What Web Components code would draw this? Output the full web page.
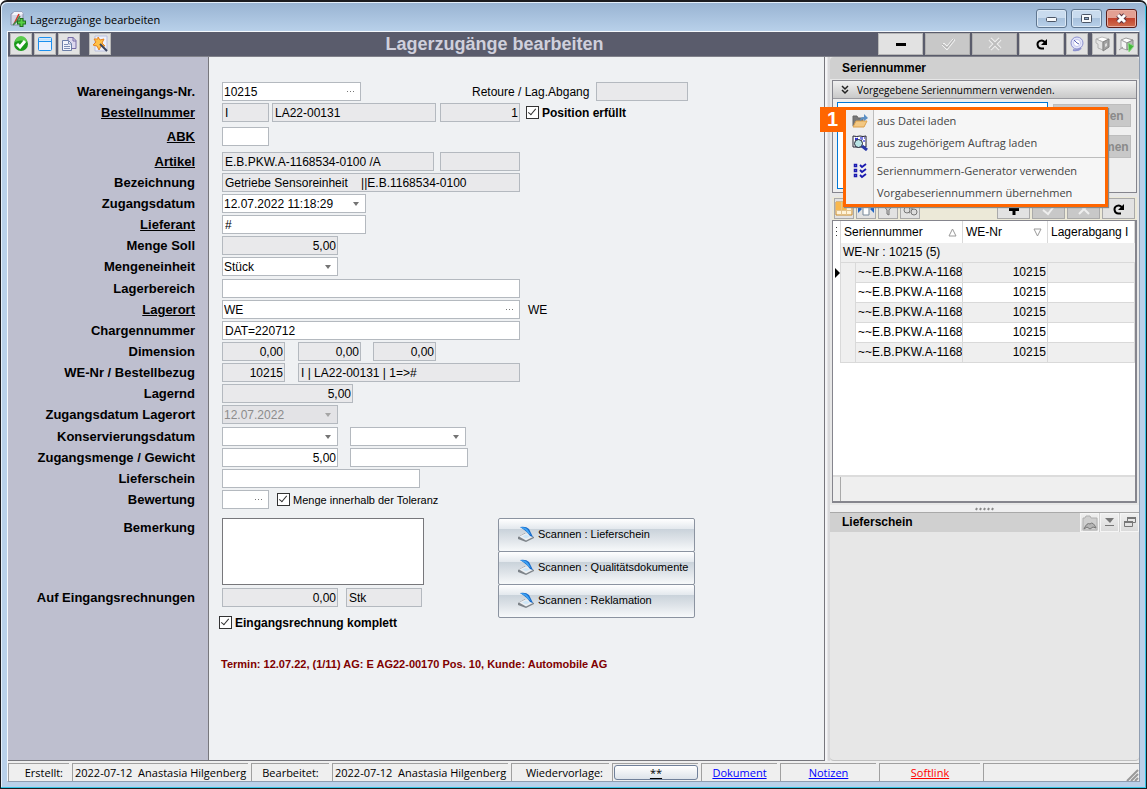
<!DOCTYPE html>
<html lang="de">
<head>
<meta charset="utf-8">
<title>Lagerzugänge bearbeiten</title>
<style>
  html, body { margin: 0; height: 100%; }
  body { font: 12px/16px "Liberation Sans", Arial, sans-serif; color: #000; background: #fff; }
</style>
</head>
<body>
<app-window></app-window>

<template id="t-window">
  <style>
    :host { display: flex; flex-direction: column; box-sizing: border-box; min-height: 100vh; min-width: 1000px;
      border: 1px solid #1b1b1f; border-top-width: 2px; border-radius: 7px 7px 0 0; padding: 0 6px 6px;
      background: linear-gradient(#98b3d2 0, #b9d1ea 30px, #b9d1ea 100%);
      box-shadow: inset -1px -1px #35c5e6, inset 1px 1px #e4effa; }
    .client { flex: 1; display: flex; flex-direction: column; border: 1px solid #8f9db0; border-top-color: #f4f8fc; border-left-color: #f4f8fc; background: #efefef; min-height: 0; }
    main { flex: 1; display: grid; grid-template-columns: 1fr 309px; column-gap: 5px; min-height: 0; background: linear-gradient(90deg, #f4f4f6, #f4f4f6 calc(100% - 312px), #d8d8da calc(100% - 311px)); }
  </style>
  <title-bar>Lagerzugänge bearbeiten</title-bar>
  <div class="client">
    <main-toolbar>Lagerzugänge bearbeiten</main-toolbar>
    <main>
      <receipt-form></receipt-form>
      <side-panel></side-panel>
    </main>
    <status-bar></status-bar>
  </div>
</template>

<template id="t-title">
  <style>
    :host { display: flex; align-items: center; height: 29px; padding: 0 3px 0 3px; gap: 4px; font: 11px/16px "Open Sans", "Noto Sans", sans-serif; }
    .name { flex: 1; padding-top: 6px; }
    .logo { padding-top: 4px; height: 16px; }
    button { box-sizing: border-box; width: 31px; height: 19px; margin: 4px 0 0; padding: 0; border: 1px solid #5f7690; border-radius: 3px;
      background: linear-gradient(#c9dbee 0 45%, #a8c1dc 50%, #b8d0ea); box-shadow: inset 0 0 0 1px #dbe8f5; display: grid; place-items: center; }
    .close { border-color: #5b1d1a; background: linear-gradient(#e3a093 0 45%, #c2422c 50%, #cf6f50); box-shadow: inset 0 0 0 1px #e9b0a4; }
    svg { display: block; }
  </style>
  <span class="logo"><svg width="16" height="16" viewBox="0 0 16 16"><path d="M1 3l3-2h8l1 2v10l-2 1H1z" fill="#d4d6e6" stroke="#8a8eaa"/><path d="M4 1h8l1 2-3 1H2z" fill="#f4f4fa"/><path d="M9 3L4 13M6 8l3 3" stroke="#d23a2a" stroke-width="1.600"/><path d="M3 14l4-4 3-5" fill="none" stroke="#3f8b4d" stroke-width="1.500"/><path d="M11.500 7v9M7 11.500h9" stroke="#1c6e1c" stroke-width="4"/><path d="M11.500 8v7M8 11.500h7" stroke="#58cf45" stroke-width="2"/></svg></span>
  <span class="name"><slot></slot></span>
  <button aria-label="Minimieren"><svg width="13" height="11"><rect x="1.500" y="4.500" width="10" height="4" rx="1" fill="#f8fafc" stroke="#4b5566"/></svg></button>
  <button aria-label="Maximieren"><svg width="13" height="11"><rect x="1.500" y="1.500" width="10" height="8" rx="1" fill="#f8fafc" stroke="#4b5566"/><rect x="4.500" y="4.500" width="4" height="2" fill="#8fa9c6" stroke="#4b5566"/></svg></button>
  <button class="close" aria-label="Schließen"><svg width="13" height="11"><path d="M3 2l7 7M10 2l-7 7" stroke="#5a3440" stroke-width="5"/><path d="M3 2l7 7M10 2l-7 7" stroke="#fff" stroke-width="3"/></svg></button>
</template>

<template id="t-toolbar">
  <style>
    :host { display: flex; align-items: center; gap: 2px; height: 24px; padding: 0 1px 0 2px; background: #5a5c6c; border-bottom: 1px solid #80818a; }
    h1 { flex: 1; margin: 0; text-align: center; color: #cfd0dc; font: bold 18px/24px "Liberation Sans", Arial, sans-serif; }
    button { box-sizing: border-box; width: 22px; height: 22px; padding: 0; border: 1px solid #b8b8b8; background: #e2e2e2; display: grid; place-items: center; }
    button.wide { width: 45px; }
    button:disabled { background: #c8c8c8; border-color: #b0b0b0; }
    .sp { margin-left: 7px; } .sp2 { margin-left: 2px; }
    svg { display: block; }
  </style>
  <button aria-label="OK"><svg width="16" height="16"><circle cx="8" cy="8" r="7" fill="#1b9a1b"/><path d="M2 6a6 6 0 0 1 12 0q-6-3-12 0" fill="#5ccb4d"/><path d="M4 8l3 3 5-6" fill="none" stroke="#fff" stroke-width="3"/></svg></button>
  <button aria-label="Fenster"><svg width="16" height="16"><rect x="1.500" y="1.500" width="13" height="13" rx="1" fill="#eaf0fd" stroke="#1b8fee"/><path d="M2 3.500h12" stroke="#bfe0fb" stroke-width="2"/><path d="M1 5.500h14" stroke="#1b8fee"/></svg></button>
  <button aria-label="Kopieren"><svg width="16" height="16"><path d="M7 1.500h5l3 3v8H7z" fill="#dcd8ee" stroke="#776ca6"/><path d="M12 1v4h3" fill="none" stroke="#776ca6"/><path d="M1.500 4.500h6l3 3v7h-9z" fill="#f1f4fa" stroke="#6c7fa8"/><path d="M7.500 5v3h3M3 8.500h4M3 10.500h6M3 12.500h6" fill="none" stroke="#7d8fb5"/></svg></button>
  <button class="sp" aria-label="Assistent"><svg width="18" height="18"><path d="M4 1h12v15H4z" fill="#eef0fb" stroke="#b9bfdf"/><path d="M7 2l2 3 4-1-2 4 3 3h-4l-2 4-2-4-4-1 3-3-2-3h4z" fill="#ffc24a" stroke="#e8841e"/><path d="M9 9l7 7" stroke="#39435e" stroke-width="2"/></svg></button>
  <h1><slot></slot></h1>
  <button class="wide" aria-label="Entfernen"><svg width="16" height="16"><path d="M3 8.500h10" stroke="#000" stroke-width="3"/></svg></button>
  <button class="wide" disabled aria-label="Übernehmen"><svg width="16" height="16"><path d="M2 9l2-2 3 3 6-7 2 1-8 10z" fill="#cfcfcf" stroke="#f2f2f2"/><path d="M2 8l5 4 7-9" fill="none" stroke="#b0b0b0"/></svg></button>
  <button class="wide" disabled aria-label="Abbrechen"><svg width="16" height="16"><path d="M3 3l10 10M13 3L3 13" stroke="#efefef" stroke-width="4"/><path d="M3 3l10 10M13 3L3 13" stroke="#bdbdbd" stroke-width="2"/></svg></button>
  <button class="wide" aria-label="Aktualisieren"><svg width="16" height="16"><path d="M10 12.500H8a4 4 0 1 1 3-6" fill="none" stroke="#000" stroke-width="2"/><path d="M13 3v6H7z"/></svg></button>
  <button aria-label="Verlauf"><svg width="16" height="16"><circle cx="8" cy="7" r="6" fill="#e2e4fa" stroke="#8d92cf"/><circle cx="8" cy="7" r="3.500" fill="#fff" stroke="#c3c6ec"/><path d="M5 4l3 3 2 1" fill="none" stroke="#5a62b5"/><path d="M4 14q5 1 8-2" fill="none" stroke="#8d92cf" stroke-width="2"/></svg></button>
  <button class="sp2" aria-label="Lager"><svg width="16" height="16"><path d="M1 3l6-2 7 2-6 3z" fill="#fff" stroke="#bbb"/><path d="M1 3l7 3v8l-5-2V8L1 7z" fill="#e3e3e3" stroke="#b3b3b3"/><path d="M8 6l6-3v8l-6 4z" fill="#a2a2a2" stroke="#828282"/><path d="M10 8l2-1v3l-2 1z" fill="#ddd"/></svg></button>
  <button aria-label="Lager buchen"><svg width="16" height="16"><path d="M2 4l5-2 7 2-6 3z" fill="#fff" stroke="#999"/><path d="M2 4l6 3v7l-6-2z" fill="#f5f5f5" stroke="#aaa"/><path d="M8 7l6-3v7l-6 3z" fill="#bbb" stroke="#888"/><path d="M0 14l4-3" stroke="#999"/><path d="M9 7l6 3-5 6z" fill="#45b83b" stroke="#8fd888"/></svg></button>
</template>

<template id="t-row">
  <style>
    :host { display: grid; grid-template-columns: 187px 1fr; column-gap: 27px; margin-bottom: 2px; align-items: center; min-height: 19px; }
    .label { text-align: right; }
    .fields { display: flex; align-items: center; }
  </style>
  <div class="label"><slot name="label"></slot></div>
  <div class="fields"><slot></slot></div>
</template>

<template id="t-form">
  <style>
    :host { display: block; box-sizing: border-box; padding-top: 25px; border-right: 1px solid #77777d; border-bottom: 1px solid #77777d;
      background: linear-gradient(90deg, #bebfcf 200px, #77777d 200px 201px, #eff1f3 201px); }
    .gap1 { margin-bottom: 3px; } .gap5 { margin-bottom: 5px; } .gap6 { margin-bottom: 6px; }
    [slot=label] { font: bold 13px/19px "Liberation Sans", Arial, sans-serif; color: #000; }
    a { text-decoration: underline; }
    input, select, textarea, .box { box-sizing: border-box; border: 1px solid #b4b9bf; background: #fff; color: #000; margin: 0; border-radius: 0;
      font: 12px/17px "Liberation Sans", Arial, sans-serif; height: 19px; padding: 0 2px; outline: none; appearance: none; }
    input[readonly] { background: #e9e9eb; }
    .num { text-align: right; padding-right: 1px; }
    textarea { height: 67px; width: 202px; border-color: #77777b; resize: none; display: block; }
    .w47 { width: 47px; } .w63 { width: 63px; } .w76 { width: 76px; } .w80 { width: 80px; } .w92 { width: 92px; } .w116 { width: 116px; } .w118 { width: 118px; } .w131 { width: 131px; }
    .w139 { width: 139px; } .w144 { width: 144px; } .w164 { width: 164px; } .w198 { width: 198px; } .w212 { width: 212px; } .w222 { width: 222px; } .w298 { width: 298px; }
    .ml3 { margin-left: 3px; } .ml4 { margin-left: 4px; } .ml6 { margin-left: 6px; } .ml8 { margin-left: 8px; } .ml12 { margin-left: 12px; } .ml13 { margin-left: 13px; }
    .box { display: flex; padding: 0; }
    .box input, .box select { border: 0; flex: 1; min-width: 0; height: 17px; background: none; padding: 1px 1px 0; line-height: 16px; }
    .drop::after { content: ""; align-self: center; border: 3px solid transparent; border-top: 4px solid #747474; border-bottom: 0; margin-right: 6px; }
    .off { background: #e3e3e6; } .off select { color: #8c8c8c; opacity: 1; } .off::after { border-top-color: #a5a5a5; }
    .more { border: 0; padding: 0; width: 18px; background: none; flex: none; }
    .more svg { display: block; }
    input[type=checkbox] { width: 13px; height: 13px; padding: 0; border: 1px solid #333; position: relative; flex: none; }
    input[type=checkbox]:checked::after { content: ""; position: absolute; left: 3px; top: 0; width: 3px; height: 7px; border: solid #333; border-width: 0 1px 1px 0; transform: rotate(40deg); }
    .chk { margin-left: 3px; font-weight: bold; } .small { font-weight: normal; font-size: 11px; }
    .ret { margin: 0 7px 0 110px; padding-left: 1px; }
    .lower { display: grid; grid-template-columns: 490px 197px; margin-top: 9px; }
    .top { align-items: start; margin-bottom: 3px; }
    .term { margin: 24px 0 0 213px; font-weight: bold; font-size: 11px; color: #800000; }
    .scan { display: flex; flex-direction: column; }
    .done { display: flex; align-items: center; margin: 6px 0 0 211px; height: 19px; }
  </style>
  <form-row><label slot="label" for="wnr">Wareneingangs-Nr.</label>
    <span class="box w139"><input id="wnr" value="10215"><button type="button" class="more" aria-label="Auswahl"><svg width="18" height="17"><path d="M5 8.500h1M8 8.500h1M11 8.500h1" stroke="#777"/></svg></button></span>
    <label class="ret" for="ret">Retoure / Lag.Abgang</label><input id="ret" class="w92" readonly></form-row>
  <form-row class="gap5"><a slot="label" href="#bestellnummer">Bestellnummer</a>
    <input class="w47" readonly value="I" aria-label="Bestellart"><input class="w164 ml3" readonly value="LA22-00131" aria-label="Bestellnummer"><input class="w80 num ml4" readonly value="1" aria-label="Position"><input type="checkbox" id="pos" checked class="ml6"><label class="chk" for="pos">Position erfüllt</label></form-row>
  <form-row class="gap6"><a slot="label" href="#abk">ABK</a><input class="w47" aria-label="ABK"></form-row>
  <form-row><a slot="label" href="#artikel">Artikel</a><input class="w212" readonly value="E.B.PKW.A-1168534-0100 /A" aria-label="Artikel"><input class="w80 ml6" readonly aria-label="Artikelzusatz"></form-row>
  <form-row><label slot="label" for="bez">Bezeichnung</label><input id="bez" class="w298" readonly value="Getriebe Sensoreinheit &nbsp;&nbsp; ||E.B.1168534-0100"></form-row>
  <form-row><label slot="label" for="zd">Zugangsdatum</label><span class="box drop w144"><select id="zd"><option>12.07.2022 11:18:29</option></select></span></form-row>
  <form-row><a slot="label" href="#lieferant">Lieferant</a><input class="w144" value="#" aria-label="Lieferant"></form-row>
  <form-row><label slot="label" for="ms">Menge Soll</label><input id="ms" class="w116 num" readonly value="5,00"></form-row>
  <form-row class="gap1"><label slot="label" for="me">Mengeneinheit</label><span class="box drop w116"><select id="me"><option>Stück</option></select></span></form-row>
  <form-row><label slot="label" for="lb">Lagerbereich</label><input id="lb" class="w298"></form-row>
  <form-row><a slot="label" href="#lagerort">Lagerort</a><span class="box w298"><input value="WE" aria-label="Lagerort"><button type="button" class="more" aria-label="Auswahl"><svg width="18" height="17"><path d="M5 8.500h1M8 8.500h1M11 8.500h1" stroke="#777"/></svg></button></span><span class="ml8">WE</span></form-row>
  <form-row><label slot="label" for="cn">Chargennummer</label><input id="cn" class="w298" value="DAT=220712"></form-row>
  <form-row><label slot="label" for="dim">Dimension</label><input id="dim" class="w63 num" readonly value="0,00"><input class="w63 num ml13" readonly value="0,00" aria-label="Breite"><input class="w63 num ml12" readonly value="0,00" aria-label="Höhe"></form-row>
  <form-row><label slot="label" for="web">WE-Nr / Bestellbezug</label><input id="web" class="w63 num" readonly value="10215"><input class="w222 ml13" readonly value="I | LA22-00131 | 1=&gt;#" aria-label="Bestellbezug"></form-row>
  <form-row><label slot="label" for="lag">Lagernd</label><input id="lag" class="w131 num" readonly value="5,00"></form-row>
  <form-row class="gap1"><label slot="label" for="zl">Zugangsdatum Lagerort</label><span class="box drop off w116"><select id="zl" disabled><option>12.07.2022</option></select></span></form-row>
  <form-row><label slot="label" for="kd">Konservierungsdatum</label><span class="box drop w116"><select id="kd"><option></option></select></span><span class="box drop w116 ml12"><select aria-label="Konservierung bis"><option></option></select></span></form-row>
  <form-row><label slot="label" for="zm">Zugangsmenge / Gewicht</label><input id="zm" class="w116 num" value="5,00"><input class="w118 ml12" aria-label="Gewicht"></form-row>
  <form-row><label slot="label" for="ls">Lieferschein</label><input id="ls" class="w198"></form-row>
  <form-row><label slot="label" for="bw">Bewertung</label><span class="box w47"><input id="bw"><button type="button" class="more" aria-label="Auswahl"><svg width="18" height="17"><path d="M5 8.500h1M8 8.500h1M11 8.500h1" stroke="#777"/></svg></button></span><input type="checkbox" id="tol" checked class="ml8"><label class="chk small" for="tol">Menge innerhalb der Toleranz</label></form-row>
  <div class="lower">
    <div>
      <form-row class="top"><label slot="label" for="bem">Bemerkung</label><textarea id="bem"></textarea></form-row>
      <form-row><label slot="label" for="ae">Auf Eingangsrechnungen</label><input id="ae" class="w116 num" readonly value="0,00"><input class="w76 ml8" readonly value="Stk" aria-label="Einheit"></form-row>
      <div class="done"><input type="checkbox" id="kom" checked><label class="chk" for="kom">Eingangsrechnung komplett</label></div>
    </div>
    <div class="scan">
      <scan-button>Scannen : Lieferschein</scan-button>
      <scan-button>Scannen : Qualitätsdokumente</scan-button>
      <scan-button>Scannen : Reklamation</scan-button>
    </div>
  </div>
  <div class="term">Termin: 12.07.22, (1/11) AG: E AG22-00170 Pos. 10, Kunde: Automobile AG</div>
</template>

<template id="t-scan">
  <style>
    :host { display: block; height: 33px; }
    button { box-sizing: border-box; width: 100%; height: 34px; display: flex; align-items: center; gap: 4px; padding: 0 0 2px 19px; border: 1px solid #8b93a0; border-radius: 2px;
      background: linear-gradient(#fff 0, #e4e9ee 30%, #c9d2da 31%, #dfe4e9 65%, #f7f9fa); font: 11px/16px "Liberation Sans", Arial, sans-serif; color: #000; }
    svg { flex: none; }
  </style>
  <button type="button"><svg width="16" height="16"><path d="M0 11l7-4 9 4v1l-8 4-8-3z" fill="#7d8389"/><path d="M1 10.500l7-3.500 7 4-7 3.500z" fill="#eceff2"/><path d="M4 10.500l4-2 4 2-4 2z" fill="#cfe6f6"/><path d="M2 1q6-1 9 2l4 8-3-1q-2-4-10-9z" fill="#1668c8"/><path d="M2 1q6 0 8 3l3 5-3-2q-3-4-8-6z" fill="#3fa4f5"/></svg><slot></slot></button>
</template>

<template id="t-side">
  <style>
    :host { display: flex; flex-direction: column; min-width: 0; position: relative; background: #e7e7e7; }
    h2 { margin: 0; padding-left: 12px; height: 20px; font: bold 12px/20px "Liberation Sans", Arial, sans-serif; background: #d0d0d0; border-top: 1px solid #b7b7b7; }
    .first { height: 22px; line-height: 22px; border-top: 0; border-radius: 4px 4px 0 0; }
    .group { margin: 1px 2px 0; border: 1px solid #85858d; height: 113px; box-sizing: border-box; background: #efefef; }
    .cap { display: flex; align-items: center; gap: 7px; height: 17px; padding-left: 7px; background: linear-gradient(#f0f0f0, #c9c9c9); border-bottom: 1px solid #9a9aa0; font: 10px/16px "Open Sans", "Noto Sans", sans-serif; }
    .body { display: flex; gap: 5px; padding: 3px 4px; }
    textarea { box-sizing: border-box; width: 211px; height: 87px; border: 1px solid #0078d7; padding: 1px; resize: none; font: 12px/16px "Liberation Sans", Arial, sans-serif; outline: none; }
    .acts { display: grid; gap: 8px; align-content: start; padding-top: 2px; }
    .acts button { width: 78px; height: 23px; padding: 0; border: 1px solid #bdbdbd; background: #c8c8c8; color: #8a8a8a; font: bold 12px/18px "Liberation Sans", Arial, sans-serif; }
    .split { height: 7px; display: grid; place-items: center; background: #efeff0; margin-top: 2px; }
    .lower { flex: 1; display: flex; flex-direction: column; border: solid #bfbfbf; border-width: 0 0 1px; border-radius: 0 0 4px 4px; }
    .head { display: flex; background: #d0d0d0; border-top: 1px solid #a9a9a9; height: 19px; }
    .head h2 { flex: 1; border: 0; height: 19px; line-height: 19px; background: none; }
    .head button { width: 19px; height: 19px; padding: 0; margin-left: 1px; border: 1px solid #f5f5f5; background: linear-gradient(#efefef, #dadada); display: grid; place-items: center; }
    context-menu { position: absolute; left: 13px; top: 50px; }
    .badge { position: absolute; left: -10px; top: 50px; width: 25px; height: 25px; background: #ff6600; color: #fff; font: bold 20px/25px "Liberation Sans", Arial, sans-serif; text-align: center; z-index: 1; }
    svg { display: block; }
  </style>
  <h2 class="first">Seriennummer</h2>
  <section class="group">
    <div class="cap"><svg width="10" height="12"><path d="M2 2l3 3 3-3M2 6l3 3 3-3" fill="none" stroke="#222" stroke-width="1.500"/></svg>Vorgegebene Seriennummern verwenden.</div>
    <div class="body"><textarea aria-label="Seriennummern"></textarea>
      <div class="acts"><button disabled>Generieren</button><button disabled>Übernehmen</button></div></div>
  </section>
  <serial-grid></serial-grid>
  <div class="split"><svg width="20" height="4"><path d="M1 3l1-2M5 3l1-2M9 3l1-2M13 3l1-2M17 3l1-2" stroke="#888" stroke-width="2"/></svg></div>
  <section class="lower">
    <div class="head"><h2>Lieferschein</h2>
      <button aria-label="Bild öffnen"><svg width="16" height="16"><path d="M1 3h2l1-2h4l1 2h6v12H1z" fill="#cfcfcf" stroke="#b0b0b0"/><path d="M2 14q3-7 6-5 3-3 6 4l-3-1-3 2-3-2z" fill="#b5b5b5" stroke="#777"/></svg></button>
      <button aria-label="Einklappen"><svg width="13" height="13"><path d="M2 2h9l-4 5z" fill="#777"/><path d="M2 9.500h9" stroke="#777"/></svg></button>
      <button aria-label="Fenster lösen"><svg width="14" height="13"><path d="M4.500 5V1.500h8v5h-3M1.500 5.500h8v5h-8z" fill="none" stroke="#777"/><path d="M1 6h9M4 2h9" stroke="#777" stroke-width="2"/></svg></button>
    </div>
  </section>
  <div class="badge">1</div>
  <context-menu></context-menu>
</template>

<template id="t-menu">
  <style>
    :host { display: block; box-sizing: border-box; width: 265px; border: 3px solid #ff6600; color: #444;
      background: linear-gradient(90deg, #efefef 27px, #bdbdbd 27px 28px, #f6f6f6 28px); box-shadow: 1px 1px 1px #888; font: 11px/16px "Open Sans", "Noto Sans", sans-serif; z-index: 2; }
    button { display: grid; grid-template-columns: 28px 1fr; align-items: center; width: 100%; height: 22px; border: 0; background: none; padding: 0; text-align: left; color: inherit; font: inherit; }
    button svg { margin-left: 6px; }
    span { padding-left: 3px; grid-column: 2; }
    hr { margin: 3px 0 2px 30px; border: 0; border-top: 1px solid #bdbdbd; }
  </style>
  <div role="menu">
    <button role="menuitem"><svg width="16" height="16"><path d="M1 13V3h4l1 2h5v4" fill="#777" stroke="#666"/><path d="M1 14l3-6h11l-3 6z" fill="#f3c883" stroke="#dca14d"/><path d="M8 8q0-4 4-4V1l4 4-4 3V6q-2 0-4 2z" fill="#5b8fc4"/></svg><span>aus Datei laden</span></button>
    <button role="menuitem"><svg width="16" height="16"><path d="M1 1q4 1 7 0 3 1 6 0v11H1z" fill="#fff" stroke="#223"/><path d="M3 3l3 2M3 5l3-2M8 3h1M10 2v3M12 3h1M11 6h2" stroke="#00c"/><circle cx="6.500" cy="8.500" r="4" fill="#b9e4e4" stroke="#223"/><path d="M10 11l5 4" stroke="#2a3aa8" stroke-width="3"/></svg><span>aus zugehörigem Auftrag laden</span></button>
    <hr>
    <button role="menuitem"><svg width="16" height="16"><path d="M2.500 1.500h2v2h-2zM2.500 6.500h2v2h-2zM2.500 11.500h2v2h-2z" fill="#fff" stroke="#1a1ab0" stroke-width="1.500"/><path d="M8 2l2 2 4-3M8 7l2 2 4-3M8 12l2 2 4-3" fill="none" stroke="#1a1ab0" stroke-width="1.800"/></svg><span>Seriennummern-Generator verwenden</span></button>
    <button role="menuitem"><span>Vorgabeseriennummern übernehmen</span></button>
  </div>
</template>

<template id="t-grid">
  <style>
    :host { display: flex; flex-direction: column; margin: 4px 2px 0; height: 306px; background: #efefef; }
    .bar { display: flex; gap: 2px; align-items: center; height: 23px; background: #ece9d8; padding: 0 2px; }
    .bar button { box-sizing: border-box; width: 20px; height: 21px; padding: 0; border: 1px solid #aaa; background: #e2e2e2; display: grid; place-items: center; }
    .bar .wide { width: 33px; }
    .bar button:disabled { background: #c8c8c8; }
    .fill { flex: 1; }
    .view { flex: 1; display: flex; flex-direction: column; border: 1px solid #85858d; border-right-width: 2px; border-bottom-width: 2px; background: #fff; overflow: hidden; }
    .foot { margin-top: auto; height: 24px; border-top: 2px solid #dcdcdc; background: linear-gradient(90deg, #efefef 7px, #a9a9a9 7px 8px, #efefef 8px); }
    table { border-collapse: separate; border-spacing: 0; table-layout: fixed; width: 100%; }
    th, td { box-sizing: border-box; height: 20px; padding: 0 2px; font: 12px/19px "Liberation Sans", Arial, sans-serif; text-align: left; white-space: nowrap; overflow: hidden; border: solid #d9d9d9; border-width: 0 1px 1px 0; }
    thead th { height: 22px; padding: 1px 0 0 3px; border-bottom: 0; background: #fff; }
    thead span { display: flex; align-items: center; justify-content: space-between; }
    thead svg { margin-right: 5px; }
    thead .ind { padding: 0; }
    .ind { border-bottom: 0; padding: 0; }
    .in { border-bottom: 0; background: #efefef; }
    .grp { background: #efefef; border-right: 0; }
    .n { text-align: right; padding-right: 1px; }
    .s { padding-right: 0; }
    tr.odd td:not(.ind) { background: #efefef; }
    tr.last .in { border-bottom: 1px solid #d9d9d9; }
    svg { display: block; }
  </style>
  <div class="bar">
    <button aria-label="Tabelle"><svg width="18" height="17"><path d="M1 2h16v13H1z" fill="#fff3d8" stroke="#c98b2b"/><path d="M1 2h16v4H1zM1 6h11v4H1z" fill="#f9b84c"/><path d="M1 10.500h16M6.500 2v13M11.500 2v13" stroke="#e2c38d"/></svg></button>
    <button aria-label="Spaltenbreite"><svg width="18" height="17"><path d="M6 2h6v13H6z" fill="#fff" stroke="#789"/><path d="M5 9l-4-4v8zM13 9l4-4v8z" fill="#2166c4"/></svg></button>
    <button aria-label="Filter"><svg width="16" height="16"><path d="M2 3h12l-5 6v5l-2-1V9z" fill="#ccc" stroke="#777"/></svg></button>
    <button aria-label="Suchen"><svg width="16" height="16"><path d="M2 5l6 7M6 3l6 7" stroke="#999" stroke-width="2"/><circle cx="5" cy="9" r="3" fill="#ddd" stroke="#777"/><circle cx="12" cy="11" r="3" fill="#ddd" stroke="#777"/></svg></button>
    <span class="fill"></span>
    <button class="wide" aria-label="Hinzufügen"><svg width="16" height="16"><path d="M3 8.500h10M8 4v10" stroke="#000" stroke-width="3"/></svg></button>
    <button class="wide" disabled aria-label="Übernehmen"><svg width="16" height="16"><path d="M2 9l5 4 7-9" fill="none" stroke="#eee" stroke-width="2"/></svg></button>
    <button class="wide" disabled aria-label="Abbrechen"><svg width="16" height="16"><path d="M3 3l10 10M13 3L3 13" stroke="#eee" stroke-width="2"/></svg></button>
    <button class="wide" aria-label="Aktualisieren"><svg width="16" height="16"><path d="M10 12.500H8a4 4 0 1 1 3-6" fill="none" stroke="#000" stroke-width="2"/><path d="M13 3v6H7z"/></svg></button>
  </div>
  <div class="view">
    <table>
      <colgroup><col style="width:8px"><col style="width:15px"><col style="width:107px"><col style="width:85px"><col></colgroup>
      <thead><tr><th class="ind"><svg width="7" height="14"><path d="M3 2h1v1H3zM3 6h1v1H3zM3 10h1v1H3z" fill="#333"/></svg></th>
        <th colspan="2"><span>Seriennummer<svg width="9" height="9"><path d="M4.500 1L8 8H1z" fill="none" stroke="#999"/></svg></span></th>
        <th><span>WE-Nr<svg width="9" height="9"><path d="M4.500 8L8 1H1z" fill="none" stroke="#999"/></svg></span></th><th>Lagerabgang I</th></tr></thead>
      <tbody>
        <tr><td class="ind"></td><td class="grp" colspan="4">WE-Nr : 10215 (5)</td></tr>
      </tbody>
    </table>
    <div class="foot"></div>
  </div>
</template>

<template id="t-status">
  <style>
    :host { display: grid; grid-template-columns: 61px 176px 78px 176px 98px 86px 76px 96px 101px 1fr; column-gap: 3px; height: 18px; padding-top: 2px; background: #efefef; font: 11px/18px "Open Sans", "Noto Sans", sans-serif; }
    :host > * { box-sizing: border-box; height: 18px; min-width: 0; border: solid #a0a0a0; border-width: 1px 0 0 1px; overflow: hidden; white-space: pre; text-align: center; }
    .l { text-align: right; padding-right: 6px; }
    .v { text-align: left; padding: 0 2px; }
    a { color: #00f; } .red { color: #f00; }
    button { box-sizing: border-box; display: block; width: 84px; height: 15px; margin: 1px; padding: 0; border: 1px solid #70809a; border-radius: 3px; background: linear-gradient(#fff, #dde3ea); font: 11px/13px "Open Sans", "Noto Sans", sans-serif; text-decoration: underline; }
    .grip { display: flex; justify-content: flex-end; align-items: flex-end; }
  </style>
  <div class="l">Erstellt:</div><div class="v">2022-07-12  Anastasia Hilgenberg</div>
  <div>Bearbeitet:</div><div class="v">2022-07-12  Anastasia Hilgenberg</div>
  <div class="l">Wiedervorlage:</div><div><button type="button">**</button></div>
  <div><a href="#dokument">Dokument</a></div><div><a href="#notizen">Notizen</a></div><div><a class="red" href="#softlink">Softlink</a></div>
  <div class="grip"><svg width="13" height="13"><path d="M1 13L12 2M5 13l7-7M9 13l3-3" stroke="#999" stroke-width="2"/></svg></div>
</template>

<script>
  // Registers an element whose open shadow root is cloned from a template.
  function define(name, templateId, setup) {
    customElements.define(name, class extends HTMLElement {
      constructor() {
        super();
        const root = this.attachShadow({ mode: 'open' });
        root.append(document.getElementById(templateId).content.cloneNode(true));
        if (setup) setup(root);
      }
    });
  }
  define('form-row', 't-row');
  define('scan-button', 't-scan');
  define('title-bar', 't-title');
  define('main-toolbar', 't-toolbar');
  define('receipt-form', 't-form');
  define('context-menu', 't-menu');
  define('serial-grid', 't-grid', root => {
    const body = root.querySelector('tbody');
    for (let i = 0; i < 5; i++) {
      const row = document.createElement('tr');
      row.className = (i % 2 ? '' : 'odd') + (i === 4 ? ' last' : '');
      const mark = i ? '' : '<svg width="7" height="11"><path d="M2 0l5 5-5 5z"/></svg>';
      row.innerHTML = `<td class="ind">${mark}</td><td class="in"></td><td class="s">~~E.B.PKW.A-1168</td><td class="n">10215</td><td></td>`;
      body.append(row);
    }
  });
  define('side-panel', 't-side');
  define('status-bar', 't-status');
  define('app-window', 't-window');
</script>
</body>
</html>
